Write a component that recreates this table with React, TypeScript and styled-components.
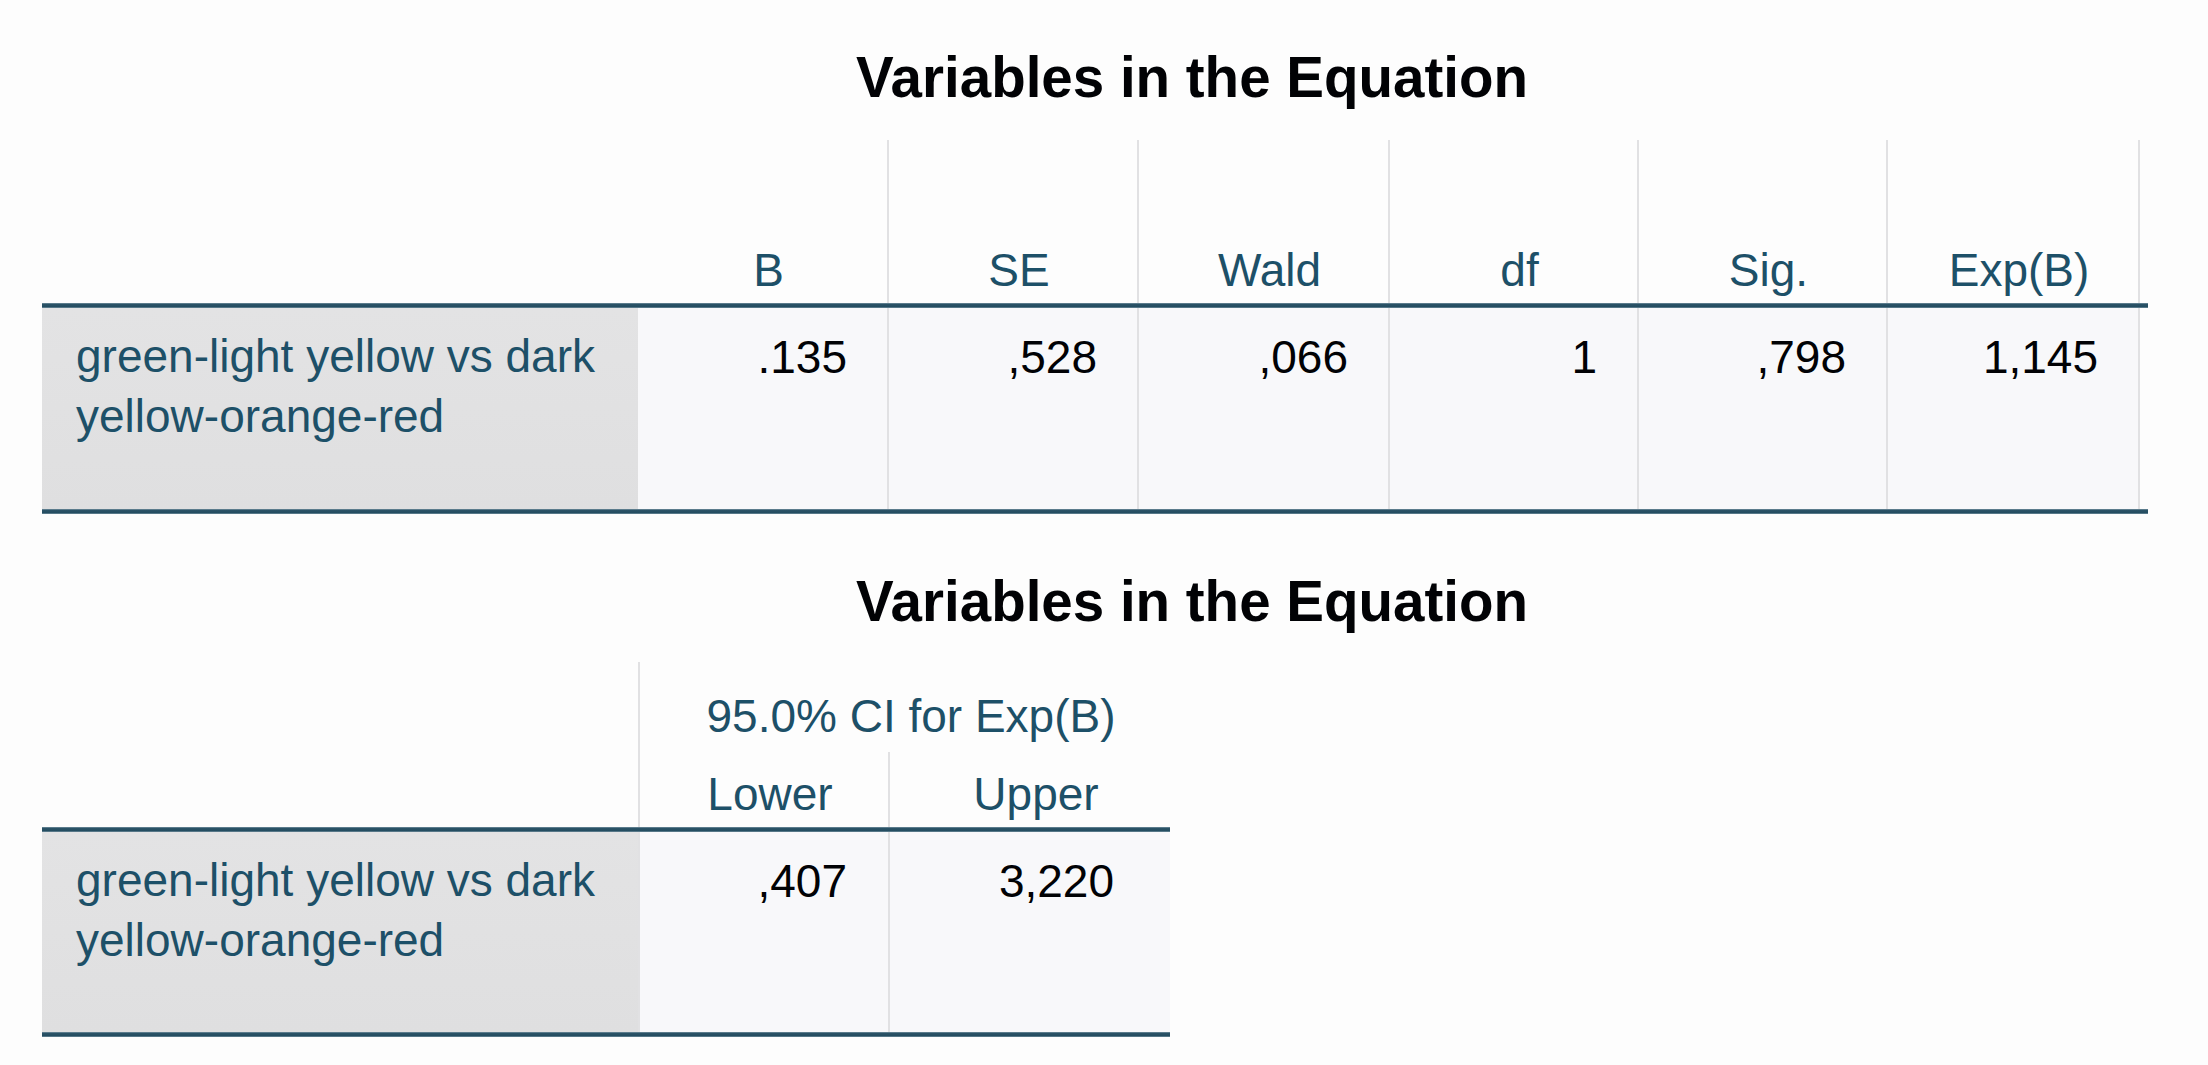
import React from "react";
import styled, { createGlobalStyle } from "styled-components";

const GlobalStyle = createGlobalStyle`
  html, body {
    margin: 0;
    padding: 0;
    background: #fdfdfd;
  }
  body {
    font-family: "Liberation Sans", Arial, Helvetica, sans-serif;
    -webkit-font-smoothing: antialiased;
  }
`;

const Page = styled.main`
  display: flex;
  flex-direction: column;
  width: 2208px;
  padding-top: 46px;
  box-sizing: border-box;
`;

const Title = styled.h1<{ $gap: number }>`
  margin: ${(p) => p.$gap}px 0 0 0;
  padding-left: 176px;
  font-size: 56.5px;
  line-height: 64px;
  font-weight: 700;
  color: #010205;
  text-align: center;
`;

const Grid = styled.div<{ $cols: string; $rows: string; $gap: number }>`
  display: grid;
  grid-template-columns: ${(p) => p.$cols};
  grid-template-rows: ${(p) => p.$rows};
  margin: ${(p) => p.$gap}px 0 0 42px;
  width: max-content;
`;

const Rule = styled.div`
  grid-column: 1 / -1;
  height: 5px;
  background: linear-gradient(
    to bottom,
    #8aa3b0 0px,
    #2c5468 1px,
    #234c60 4px,
    #8aa3b0 5px
  );
`;

const Empty = styled.div<{ $span?: number }>`
  grid-column: span ${(p) => p.$span ?? 1};
`;

const HeadCell = styled.div<{ $divider?: "left" | "right"; $span?: number; $padBottom: number }>`
  grid-column: span ${(p) => p.$span ?? 1};
  display: flex;
  align-items: flex-end;
  justify-content: center;
  padding: 0 0 ${(p) => p.$padBottom}px 12px;
  box-sizing: border-box;
  font-size: 46px;
  line-height: 52px;
  color: #1d5068;
  white-space: nowrap;
  border-left: ${(p) => (p.$divider === "left" ? "2px solid #e1e1e3" : "none")};
  border-right: ${(p) => (p.$divider === "right" ? "2px solid #e1e1e3" : "none")};
`;

const LabelCell = styled.div`
  background: linear-gradient(to bottom, #e3e3e4, #dfdfe0);
  padding: 18px 0 0 34px;
  box-sizing: border-box;
  font-size: 46px;
  line-height: 60px;
  color: #1d5068;
`;

const ValueCell = styled.div<{ $divider?: "left" | "right"; $padRight: number }>`
  background: #f8f8fa;
  padding: 23px ${(p) => p.$padRight}px 0 0;
  box-sizing: border-box;
  text-align: right;
  font-size: 46px;
  line-height: 52px;
  color: #010205;
  border-left: ${(p) => (p.$divider === "left" ? "2px solid #e1e1e3" : "none")};
  border-right: ${(p) => (p.$divider === "right" ? "2px solid #e1e1e3" : "none")};
`;

const label = (
  <>
    green-light yellow vs dark
    <br />
    yellow-orange-red
  </>
);

const mainCols = [
  { head: "B", value: ".135" },
  { head: "SE", value: ",528" },
  { head: "Wald", value: ",066" },
  { head: "df", value: "1" },
  { head: "Sig.", value: ",798" },
  { head: "Exp(B)", value: "1,145" },
];

export default function App() {
  return (
    <>
      <GlobalStyle />
      <Page>
        <Title $gap={0}>Variables in the Equation</Title>
        <Grid
          $gap={30}
          $cols="596px 251px 250px 251px 249px 249px 252px 8px"
          $rows="163px 5px 201px 5px"
        >
          <Empty />
          {mainCols.map((c) => (
            <HeadCell key={c.head} $divider="right" $padBottom={7}>
              {c.head}
            </HeadCell>
          ))}
          <Empty />
          <Rule />
          <LabelCell>{label}</LabelCell>
          {mainCols.map((c) => (
            <ValueCell key={c.head} $divider="right" $padRight={40}>
              {c.value}
            </ValueCell>
          ))}
          <Empty />
          <Rule />
        </Grid>

        <Title $gap={56}>Variables in the Equation</Title>
        <Grid $gap={28} $cols="596px 250px 282px" $rows="90px 75px 5px 200px 5px">
          <Empty />
          <HeadCell $span={2} $divider="left" $padBottom={10}>
            95.0% CI for Exp(B)
          </HeadCell>
          <Empty />
          <HeadCell $divider="left" $padBottom={7}>
            Lower
          </HeadCell>
          <HeadCell $divider="left" $padBottom={7}>
            Upper
          </HeadCell>
          <Rule />
          <LabelCell>{label}</LabelCell>
          <ValueCell $divider="left" $padRight={41}>
            ,407
          </ValueCell>
          <ValueCell $divider="left" $padRight={56}>
            3,220
          </ValueCell>
          <Rule />
        </Grid>
      </Page>
    </>
  );
}
